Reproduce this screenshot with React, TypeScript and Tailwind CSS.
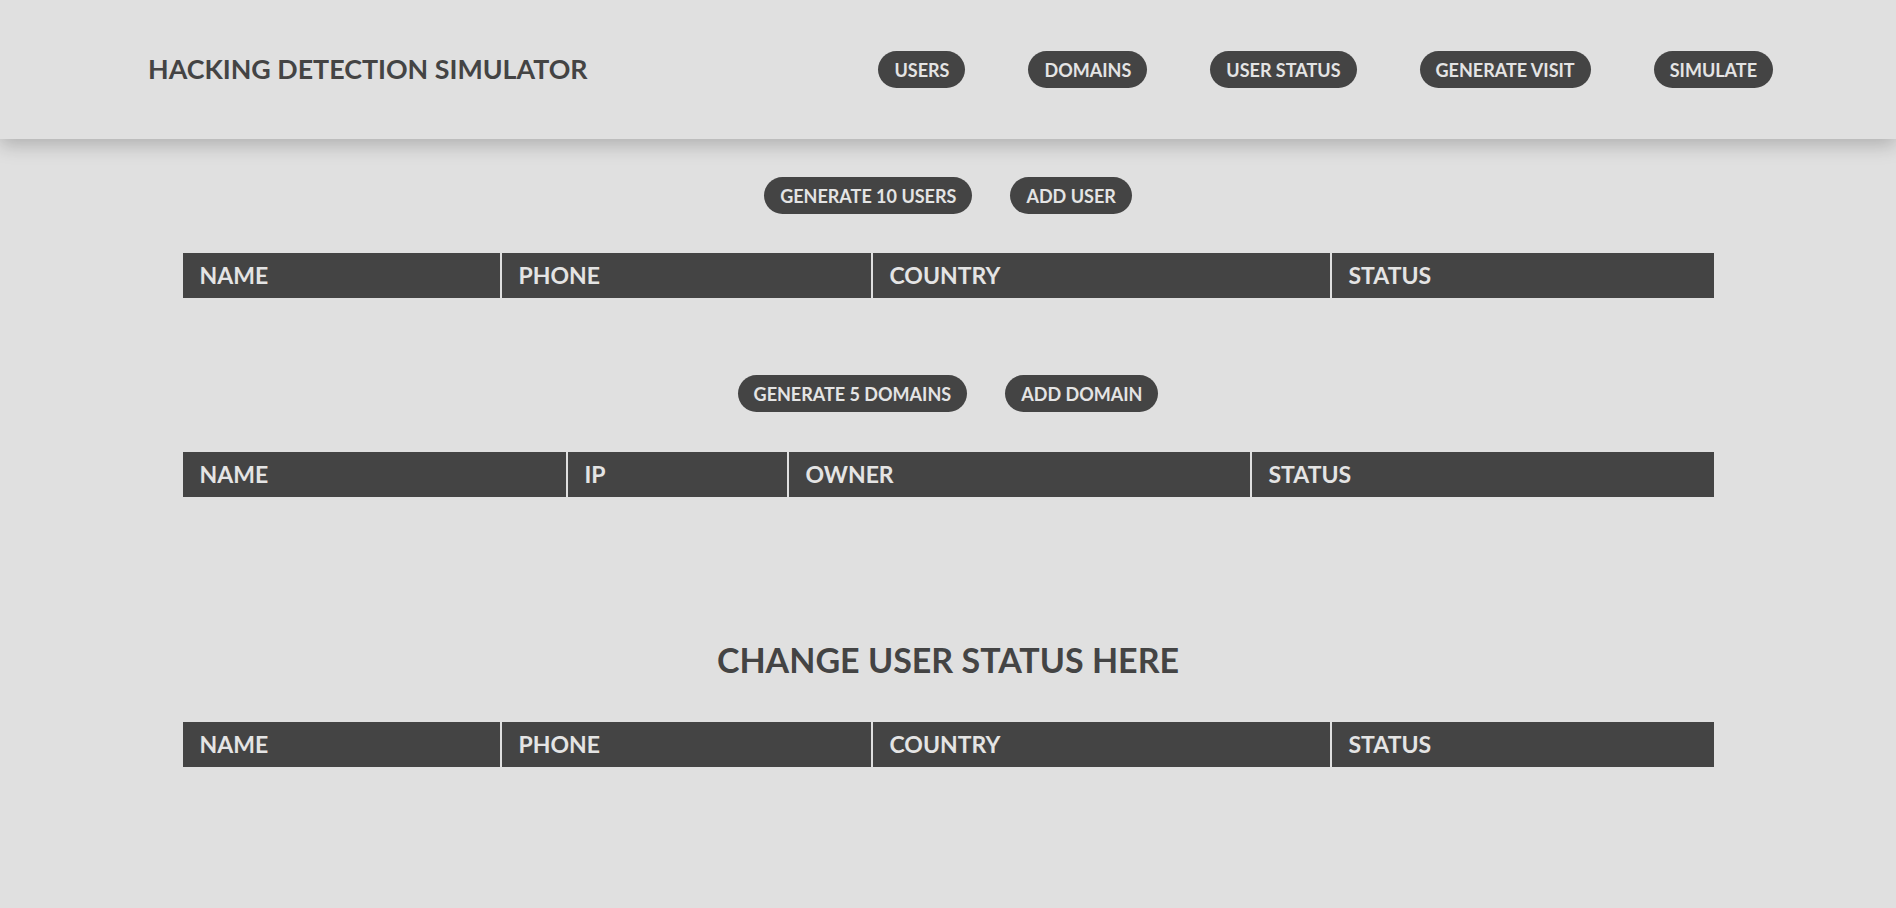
const navItems = ["USERS", "DOMAINS", "USER STATUS", "GENERATE VISIT", "SIMULATE"];

const userCols = [
  { label: "NAME", w: "w-[317px]" },
  { label: "PHONE", w: "w-[369px]" },
  { label: "COUNTRY", w: "w-[457px]" },
  { label: "STATUS", w: "w-[382px]" },
];

const domainCols = [
  { label: "NAME", w: "w-[383px]" },
  { label: "IP", w: "w-[219px]" },
  { label: "OWNER", w: "w-[461px]" },
  { label: "STATUS", w: "w-[462px]" },
];

function Pill({ children }: { children: string }) {
  return (
    <button className="h-[37px] px-[16px] rounded-full bg-[#444444] text-[#e4e4e4] text-[18px] font-bold leading-none whitespace-nowrap">
      {children}
    </button>
  );
}

function HeadRow({ cols }: { cols: { label: string; w: string }[] }) {
  return (
    <div className="flex gap-[2px] w-[1531px] mx-auto">
      {cols.map((c) => (
        <div
          key={c.label}
          className={`${c.w} h-[45px] bg-[#444444] text-[#e4e4e4] text-[23px] font-bold flex items-center px-[17px]`}
        >
          {c.label}
        </div>
      ))}
    </div>
  );
}

export default function App() {
  return (
    <div className="min-h-[908px] bg-[#e0e0e0] font-['Lato',sans-serif] text-[#444444]">
      <header className="h-[139px] flex items-center justify-between pl-[148px] pr-[123px] bg-[#e0e0e0] shadow-[0_6px_18px_rgba(0,0,0,0.22)] relative">
        <h1 className="text-[26.8px] font-bold">HACKING DETECTION SIMULATOR</h1>
        <nav className="flex gap-[63px]">
          {navItems.map((n) => (
            <Pill key={n}>{n}</Pill>
          ))}
        </nav>
      </header>

      <section className="pt-[38px]">
        <div className="flex justify-center gap-[38px]">
          <Pill>GENERATE 10 USERS</Pill>
          <Pill>ADD USER</Pill>
        </div>
        <div className="mt-[39px]">
          <HeadRow cols={userCols} />
        </div>
      </section>

      <section className="pt-[77px]">
        <div className="flex justify-center gap-[38px]">
          <Pill>GENERATE 5 DOMAINS</Pill>
          <Pill>ADD DOMAIN</Pill>
        </div>
        <div className="mt-[40px]">
          <HeadRow cols={domainCols} />
        </div>
      </section>

      <section className="pt-[146px]">
        <h2 className="text-center text-[34px] font-bold leading-none">CHANGE USER STATUS HERE</h2>
        <div className="mt-[45px]">
          <HeadRow cols={userCols} />
        </div>
      </section>
    </div>
  );
}
